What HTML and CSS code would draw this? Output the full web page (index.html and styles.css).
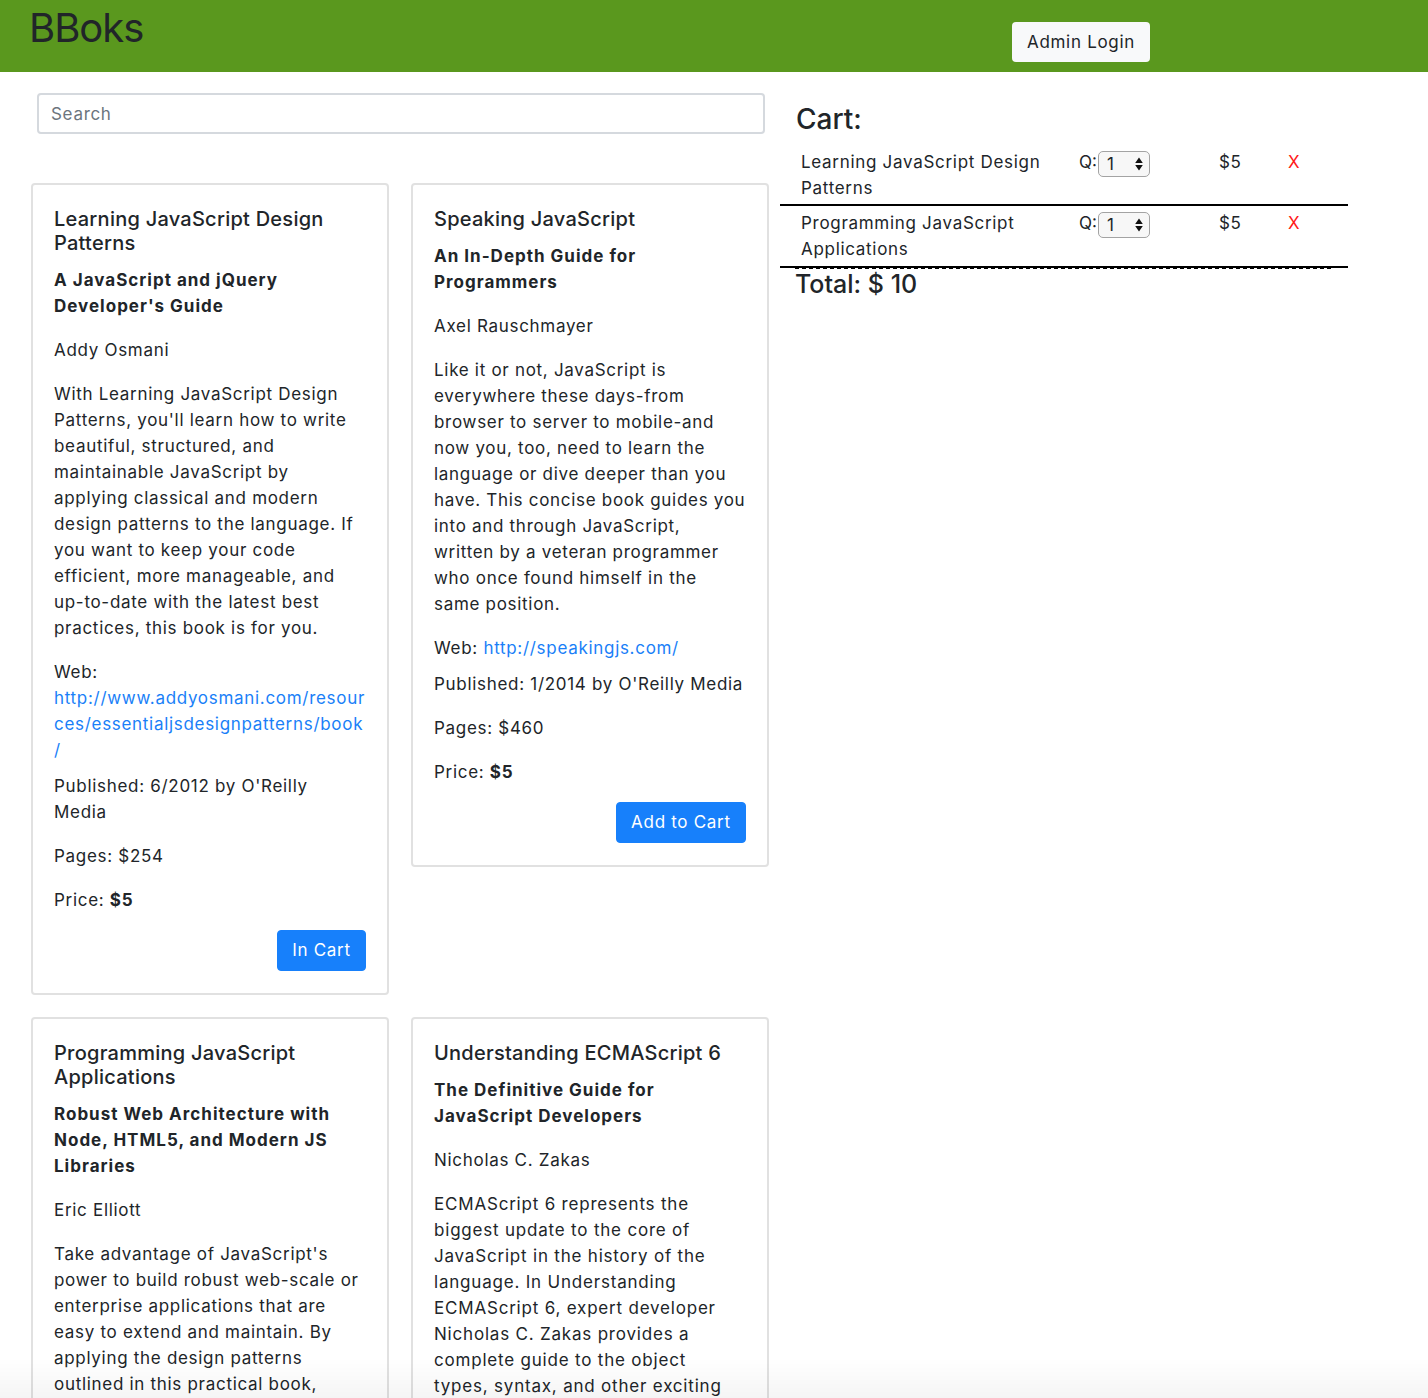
FILE: index.html
```html
<!DOCTYPE html>
<html lang="en">
<head>
<meta charset="utf-8">
<title>BBoks</title>
<link rel="stylesheet" href="styles.css">
</head>
<body>
<header class="topbar">
  <div class="brand">BBoks</div>
  <button class="admin-btn" type="button">Admin Login</button>
</header>
<main class="layout">
  <section class="shop">
    <input class="search" type="text" placeholder="Search">
    <div class="cards">
      <article class="card">
        <h5 class="card-title">Learning JavaScript Design Patterns</h5>
        <h6 class="card-subtitle">A JavaScript and jQuery Developer's Guide</h6>
        <p>Addy Osmani</p>
        <p>With Learning JavaScript Design Patterns, you'll learn how to write beautiful, structured, and maintainable JavaScript by applying classical and modern design patterns to the language. If you want to keep your code efficient, more manageable, and up-to-date with the latest best practices, this book is for you.</p>
        <p class="web">Web: <a href="#">http://www.addyosmani.com/resources/essentialjsdesignpatterns/book/</a></p>
        <p>Published: 6/2012 by O'Reilly Media</p>
        <p>Pages: $254</p>
        <p>Price: <b>$5</b></p>
        <div class="card-actions"><button class="btn" type="button">In Cart</button></div>
      </article>
      <article class="card">
        <h5 class="card-title">Speaking JavaScript</h5>
        <h6 class="card-subtitle">An In-Depth Guide for Programmers</h6>
        <p>Axel Rauschmayer</p>
        <p>Like it or not, JavaScript is everywhere these days-from browser to server to mobile-and now you, too, need to learn the language or dive deeper than you have. This concise book guides you into and through JavaScript, written by a veteran programmer who once found himself in the same position.</p>
        <p class="web">Web: <a href="#">http://speakingjs.com/</a></p>
        <p>Published: 1/2014 by O'Reilly Media</p>
        <p>Pages: $460</p>
        <p>Price: <b>$5</b></p>
        <div class="card-actions"><button class="btn" type="button">Add to Cart</button></div>
      </article>
      <article class="card">
        <h5 class="card-title">Programming JavaScript Applications</h5>
        <h6 class="card-subtitle">Robust Web Architecture with Node, HTML5, and Modern JS Libraries</h6>
        <p>Eric Elliott</p>
        <p>Take advantage of JavaScript's power to build robust web-scale or enterprise applications that are easy to extend and maintain. By applying the design patterns outlined in this practical book, experienced JavaScript developers will learn how to write flexible and resilient code that's easier-yes, easier-to work with as your code base grows.</p>
        <p class="web">Web: <a href="#">http://chimera.labs.oreilly.com/books/1234000000262/index.html</a></p>
        <p>Published: 7/2014 by O'Reilly Media</p>
        <p>Pages: $254</p>
        <p>Price: <b>$5</b></p>
        <div class="card-actions"><button class="btn" type="button">In Cart</button></div>
      </article>
      <article class="card">
        <h5 class="card-title">Understanding ECMAScript 6</h5>
        <h6 class="card-subtitle">The Definitive Guide for JavaScript Developers</h6>
        <p>Nicholas C. Zakas</p>
        <p class="desc-loose">ECMAScript 6 represents the biggest update to the core of JavaScript in the history of the language. In Understanding ECMAScript 6, expert developer Nicholas C. Zakas provides a complete guide to the object types, syntax, and other exciting changes that ECMAScript 6 brings to JavaScript.</p>
        <p class="web">Web: <a href="#">https://leanpub.com/understandinges6/read</a></p>
        <p>Published: 10/2016 by No Starch Press</p>
        <p>Pages: $352</p>
        <p>Price: <b>$5</b></p>
        <div class="card-actions"><button class="btn" type="button">Add to Cart</button></div>
      </article>
    </div>
  </section>
  <aside class="cart">
    <h3 class="cart-title">Cart:</h3>
    <div class="cart-row">
      <div class="cart-name">Learning JavaScript Design Patterns</div>
      <div class="cart-qty">Q:<span class="qty-box"><span class="qty-val">1</span><svg class="spin" width="8" height="14" viewBox="0 0 8 14"><path d="M4 0.5 L7.8 6 L0.2 6 Z M4 13.5 L7.8 8 L0.2 8 Z" fill="#111"/></svg></span></div>
      <div class="cart-price">$5</div>
      <div class="cart-remove">X</div>
    </div>
    <div class="cart-row">
      <div class="cart-name">Programming JavaScript Applications</div>
      <div class="cart-qty">Q:<span class="qty-box"><span class="qty-val">1</span><svg class="spin" width="8" height="14" viewBox="0 0 8 14"><path d="M4 0.5 L7.8 6 L0.2 6 Z M4 13.5 L7.8 8 L0.2 8 Z" fill="#111"/></svg></span></div>
      <div class="cart-price">$5</div>
      <div class="cart-remove">X</div>
    </div>
    <div class="cart-total">Total: $ 10</div>
  </aside>
</main>
<div class="screen-fade"></div>
</body>
</html>
```

FILE: styles.css
```css
* { box-sizing: border-box; }

html, body {
  margin: 0;
  padding: 0;
}

body {
  font-family: Inter, "Noto Sans", "Liberation Sans", sans-serif;
  font-size: 17px;
  line-height: 26px;
  letter-spacing: 0.7px;
  color: #212529;
  background: #fff;
}

.topbar {
  height: 72px;
  background: #5a981e;
  display: flex;
  align-items: flex-start;
  padding-left: 29px;
}

.brand {
  font-size: 40px;
  line-height: 50px;
  margin-top: 3px;
  color: #212529;
  letter-spacing: -1px;
}

.admin-btn {
  margin-left: auto;
  margin-right: 278px;
  margin-top: 22px;
  height: 40px;
  width: 138px;
  padding: 0 14px;
  border: 0;
  border-radius: 4px;
  background: #f8f9fa;
  color: #212529;
  font-family: inherit;
  font-size: 17px;
  letter-spacing: 0.7px;
}

.layout {
  display: grid;
  grid-template-columns: 780px 568px;
}

.shop {
  padding: 21px 11px 0 31px;
}

.search {
  display: block;
  width: 728px;
  height: 41px;
  margin: 0 0 0 6px;
  padding: 0 12px;
  border: 2px solid #d5d9de;
  border-radius: 4px;
  font-family: inherit;
  font-size: 17px;
  letter-spacing: 0.7px;
  color: #495057;
}

.search::placeholder { color: #6c757d; }

.cards {
  margin-top: 49px;
  display: grid;
  grid-template-columns: 358px 358px;
  gap: 22px;
  align-items: start;
}

.card {
  border: 2px solid #e1e1e1;
  border-radius: 4px;
  padding: 22px 21.3px 22px 21px;
}

.card-title {
  margin: 0 0 12px;
  font-size: 20px;
  line-height: 24px;
  font-weight: 500;
  letter-spacing: 0.25px;
}

.card-subtitle {
  margin: 0 0 18px;
  font-size: 17px;
  line-height: 26px;
  font-weight: 700;
  letter-spacing: 1px;
}

.card p {
  margin: 0 0 18px;
}

.card p.desc-loose {
  letter-spacing: 0.8px;
}

.card p.web {
  margin-bottom: 10px;
  overflow-wrap: break-word;
}

.card a {
  color: #1a7ff8;
  text-decoration: none;
}

.card-actions {
  margin-top: -1px;
  display: flex;
  justify-content: flex-end;
}

.btn {
  background: #1780fb;
  color: #fff;
  border: 1px solid #1780fb;
  border-radius: 4px;
  padding: 7px 14px;
  font-family: inherit;
  font-size: 17px;
  line-height: 25px;
  letter-spacing: 0.7px;
}

.cart {
  padding: 29px 15px 0 15px;
}

.cart-title {
  margin: 0 0 8px 1px;
  font-size: 28px;
  line-height: 36px;
  font-weight: 500;
  letter-spacing: 0;
}

.cart-row {
  margin: 0 -15px;
  display: grid;
  grid-template-columns: 284px 142px 67px 1fr;
  padding: 4px 0 3px;
  border-bottom: 2px solid #000;
}

.cart-row + .cart-row {
  padding-bottom: 4px;
}

.cart-name { padding: 0 15px 0 21px; }
.cart-qty { padding-left: 15px; display: flex; align-items: flex-start; letter-spacing: 0; }
.cart-price { padding-left: 13px; }
.cart-remove { padding-left: 15px; color: #ff1a1a; }

.qty-box {
  margin-top: 2px;
  margin-left: 1px;
  width: 52px;
  height: 26px;
  border: 1px solid #a3a3a3;
  border-radius: 5px;
  background: #f7f7f7;
  display: flex;
  align-items: center;
  justify-content: space-between;
  padding: 0 6px 0 8px;
  line-height: 24px;
}

.cart-total {
  margin-top: -1px;
  padding-top: 2px;
  font-size: 25px;
  line-height: 30px;
  font-weight: 500;
  letter-spacing: 0;
  background-image: linear-gradient(90deg, #000 4px, transparent 4px);
  background-size: 7px 2px;
  background-repeat: repeat-x;
  background-position: 0 0;
}

.screen-fade {
  position: fixed;
  left: 0;
  right: 0;
  bottom: 0;
  height: 40px;
  pointer-events: none;
  background: linear-gradient(rgba(0,0,0,0), rgba(0,0,0,0.04));
}
```
